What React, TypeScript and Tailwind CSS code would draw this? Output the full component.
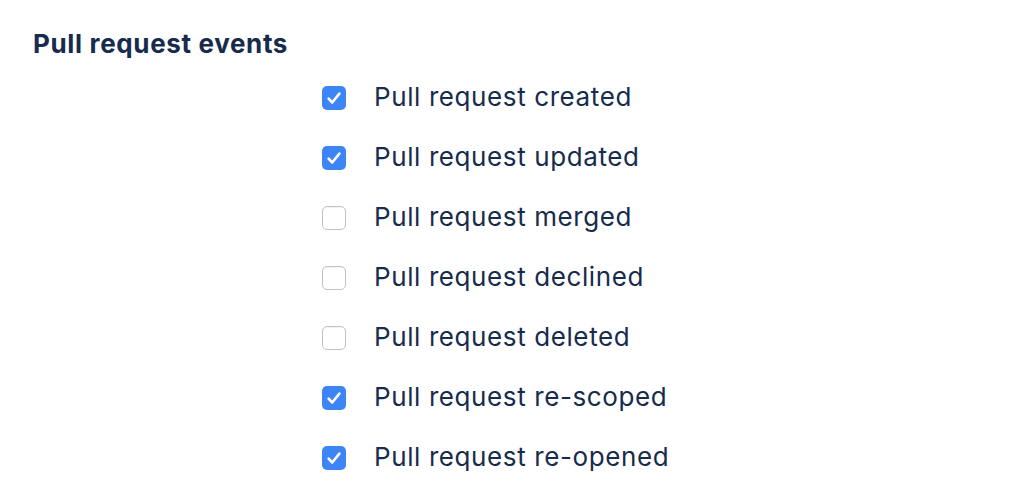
import React from "react";

const items: [string, boolean][] = [
  ["Pull request created", true],
  ["Pull request updated", true],
  ["Pull request merged", false],
  ["Pull request declined", false],
  ["Pull request deleted", false],
  ["Pull request re-scoped", true],
  ["Pull request re-opened", true],
];

function Box({ checked }: { checked: boolean }) {
  return checked ? (
    <span className="flex h-[24px] w-[24px] items-center justify-center rounded-[5px] bg-[#3d85f7]">
      <svg width="24" height="24" viewBox="0 0 24 24" fill="none">
        <path d="M6.6 12.6l3.6 3.9L17.4 7.6" stroke="white" strokeWidth="2.6" strokeLinecap="round" strokeLinejoin="round" />
      </svg>
    </span>
  ) : (
    <span className="block h-[24px] w-[24px] rounded-[5px] border border-[#c2c2c2] bg-white shadow-[inset_0_1px_1px_rgba(0,0,0,0.05)]" />
  );
}

export default function App() {
  return (
    <div className="min-h-[502px] w-[1010px] bg-white text-[#172b4d]" style={{ fontFamily: "Inter, 'Noto Sans', sans-serif" }}>
      <div className="pl-[33px] pt-[28px]">
        <h2 className="text-[26px] font-bold leading-[32px] tracking-[0.65px]">Pull request events</h2>
      </div>
      <div className="mt-[8px] flex flex-col pl-[322px]">
        {items.map(([label, c]) => (
          <label key={label} className="flex h-[60px] items-center">
            <Box checked={c} />
            <span className="ml-[28px] -translate-y-px text-[26px] leading-[32px] tracking-[0.6px]">{label}</span>
          </label>
        ))}
      </div>
    </div>
  );
}
